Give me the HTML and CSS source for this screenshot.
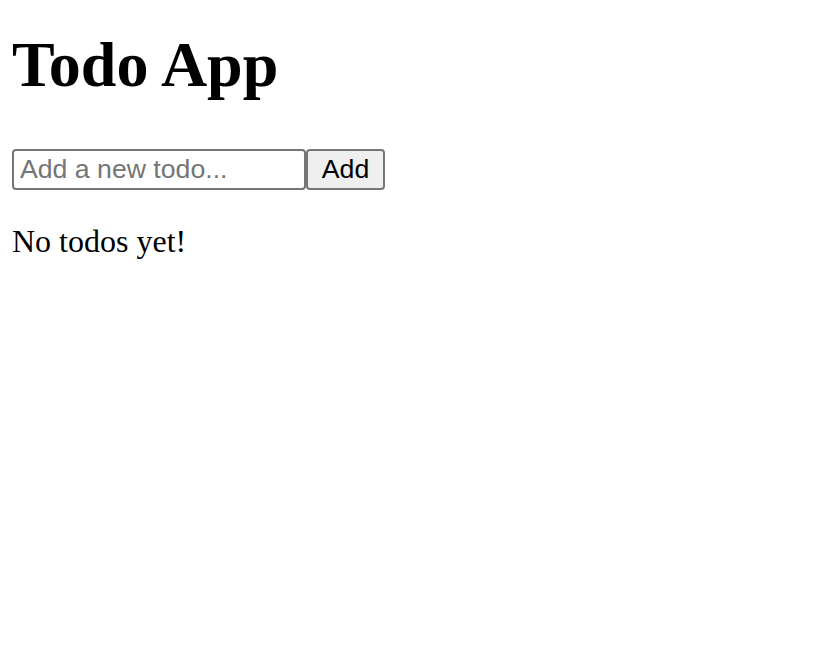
FILE: index.html
```html
<!DOCTYPE html>
<html>
<head>
<meta charset="utf-8">
<title>Todo App</title>
<link rel="stylesheet" href="styles.css">
</head>
<body>
<div class="app">
  <h1 class="title">Todo App</h1>
  <form class="add-form" onsubmit="return false;">
    <input class="todo-input" type="text" placeholder="Add a new todo..."><button class="add-btn" type="submit">Add</button>
  </form>
  <p class="empty">No todos yet!</p>
</div>
</body>
</html>
```

FILE: styles.css
```css
html, body {
  margin: 0;
  padding: 0;
  background: #ffffff;
}

body {
  font-family: "Liberation Serif", "Times New Roman", serif;
  font-size: 32px;
  color: #000000;
}

.app {
  padding: 0 12px;
}

.title {
  margin: 29px 0 0;
  font-size: 64px;
  line-height: 72px;
  font-weight: bold;
}

.add-form {
  display: flex;
  margin: 48px 0 0;
}

.todo-input {
  box-sizing: border-box;
  width: 294px;
  height: 41px;
  margin: 0;
  padding: 0 6px;
  border: 2px solid #767676;
  border-radius: 4px;
  font-family: "Liberation Sans", Arial, sans-serif;
  font-size: 26.67px;
  color: #000000;
  background: #ffffff;
}

.todo-input::placeholder {
  color: #757575;
}

.add-btn {
  box-sizing: border-box;
  width: 79px;
  height: 41px;
  margin: 0;
  padding: 0;
  border: 2px solid #767676;
  border-radius: 4px;
  background: #efefef;
  font-family: "Liberation Sans", Arial, sans-serif;
  font-size: 26.67px;
  color: #000000;
}

.empty {
  margin: 33px 0 0;
  line-height: 36px;
}
```
